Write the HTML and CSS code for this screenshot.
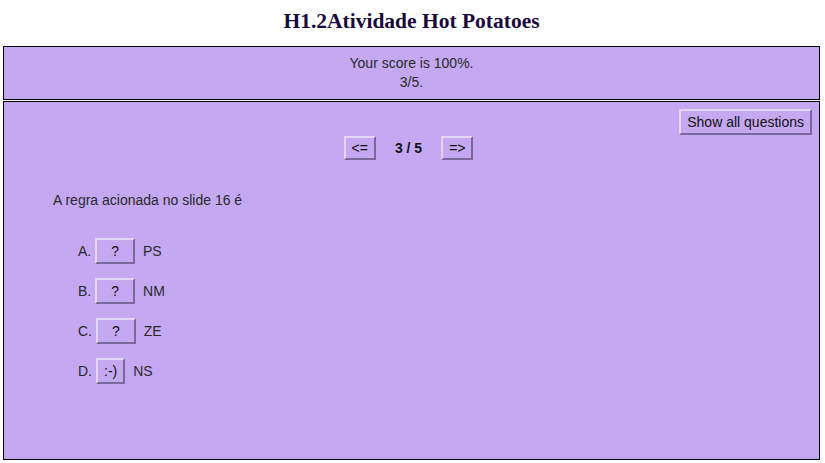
FILE: index.html
```html
<!DOCTYPE html>
<html>
<head>
<meta charset="utf-8">
<link rel="stylesheet" href="styles.css">
</head>
<body>
<div class="page">
  <h1 class="title">H1.2Atividade Hot Potatoes</h1>
  <div class="box score">
    <div>Your score is 100%.</div>
    <div>3/5.</div>
  </div>
  <div class="box main">
    <div class="toprow"><button class="btn">Show all questions</button></div>
    <div class="nav">
      <button class="btn">&lt;=</button>
      <span class="counter">3 / 5</span>
      <button class="btn">=&gt;</button>
    </div>
    <p class="question">A regra acionada no slide 16 é</p>
    <ol class="options">
      <li class="opt"><span class="letter">A.</span><button class="btn q">?</button><span>PS</span></li>
      <li class="opt"><span class="letter">B.</span><button class="btn q">?</button><span>NM</span></li>
      <li class="opt"><span class="letter">C.</span><button class="btn q">?</button><span>ZE</span></li>
      <li class="opt"><span class="letter">D.</span><button class="btn">:-)</button><span>NS</span></li>
    </ol>
  </div>
</div>
</body>
</html>
```
FILE: styles.css
```css
html, body {
  margin: 0;
  padding: 0;
  background: #ffffff;
}
.page {
  padding: 0 5px 0 3px;
  font-family: "Liberation Sans", Arial, sans-serif;
  font-size: 14px;
  color: #2a2a2a;
}
.title {
  margin: 0;
  padding: 10px 0 0 0;
  height: 36px;
  text-align: center;
  font-family: "Liberation Serif", "Times New Roman", serif;
  font-size: 21.5px;
  line-height: 22px;
  font-weight: bold;
  color: #1a0a3c;
}
.box {
  background: #c4a8f2;
  border: 1px solid #000;
}
.score {
  text-align: center;
  padding: 7px 0 7px 0;
  line-height: 19px;
  margin-bottom: 1px;
}
.main {
  height: 357px;
}
.btn {
  font-family: "Liberation Sans", Arial, sans-serif;
  font-size: 14px;
  line-height: 18px;
  color: #111;
  background: #c4a8f2;
  border: 2px solid;
  border-color: #e2d6f9 #7a699e #7a699e #e2d6f9;
  padding: 2px 6px;
  margin: 0;
}
.toprow {
  display: flex;
  justify-content: flex-end;
  padding: 7px 7px 0 0;
}
.nav {
  display: flex;
  justify-content: center;
  align-items: center;
  gap: 19px;
  margin-top: 1px;
  padding-right: 6px;
}
.nav .btn {
  padding: 1px 6px;
}
.counter {
  font-weight: bold;
  color: #111;
}
.question {
  margin: 32px 0 0 49px;
  line-height: 16px;
}
.options {
  list-style: none;
  margin: 23px 0 0 74px;
  padding: 0;
}
.opt {
  display: flex;
  align-items: center;
  gap: 4px;
  height: 40px;
}
.opt .btn + span {
  margin-left: 4px;
}
.q {
  padding: 2px 14px;
}
```
